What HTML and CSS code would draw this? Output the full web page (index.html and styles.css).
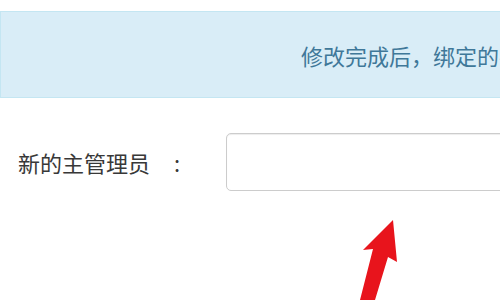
FILE: index.html
```html
<!DOCTYPE html>
<html lang="zh-CN">
<head>
<meta charset="utf-8">
<link rel="stylesheet" href="styles.css">
</head>
<body>
<div class="page">
  <div class="alert">
    <span class="alert-text">修改完成后，绑定的手机号将同步变更为新的主管理员手机号</span>
  </div>
  <div class="form-row">
    <span class="label">新的主管理员</span>
    <span class="colon">:</span>
    <input class="field" type="text">
  </div>
  <svg class="arrow" width="500" height="300" viewBox="0 0 500 300">
    <polygon points="393,220 397,262 388,257 375,300 360,300 373,249 363,250" fill="#e8141c"/>
  </svg>
</div>
</body>
</html>
```
FILE: styles.css
```css
html, body {
  margin: 0;
  padding: 0;
  background: #ffffff;
  overflow: hidden;
}
.page {
  position: relative;
  width: 500px;
  height: 300px;
  overflow: hidden;
  font-family: "Noto Sans CJK SC", "Noto Sans", sans-serif;
}
.alert {
  margin-top: 11px;
  height: 85px;
  width: 620px;
  background: #d9edf7;
  border: 1px solid #c4e6f2;
  display: flex;
  align-items: center;
  padding-left: 300px;
  box-sizing: content-box;
  white-space: nowrap;
  overflow: hidden;
}
.alert-text {
  font-size: 22px;
  color: #3f7899;
  line-height: 1;
}
.form-row {
  display: flex;
  align-items: center;
  margin-top: 35px;
  padding-left: 18px;
  white-space: nowrap;
}
.label {
  font-size: 22px;
  color: #383838;
  line-height: 1;
  flex-shrink: 0;
}
.colon {
  font-size: 22px;
  color: #383838;
  margin-left: 24px;
  line-height: 1;
  flex-shrink: 0;
}
.field {
  margin-left: 46px;
  width: 400px;
  height: 58px;
  box-sizing: border-box;
  border: 1px solid #cccccc;
  border-radius: 5px;
  box-shadow: inset 0 1px 1px rgba(0,0,0,0.075);
  flex-shrink: 0;
  outline: none;
}
.arrow {
  position: absolute;
  left: 0;
  top: 0;
}
```
